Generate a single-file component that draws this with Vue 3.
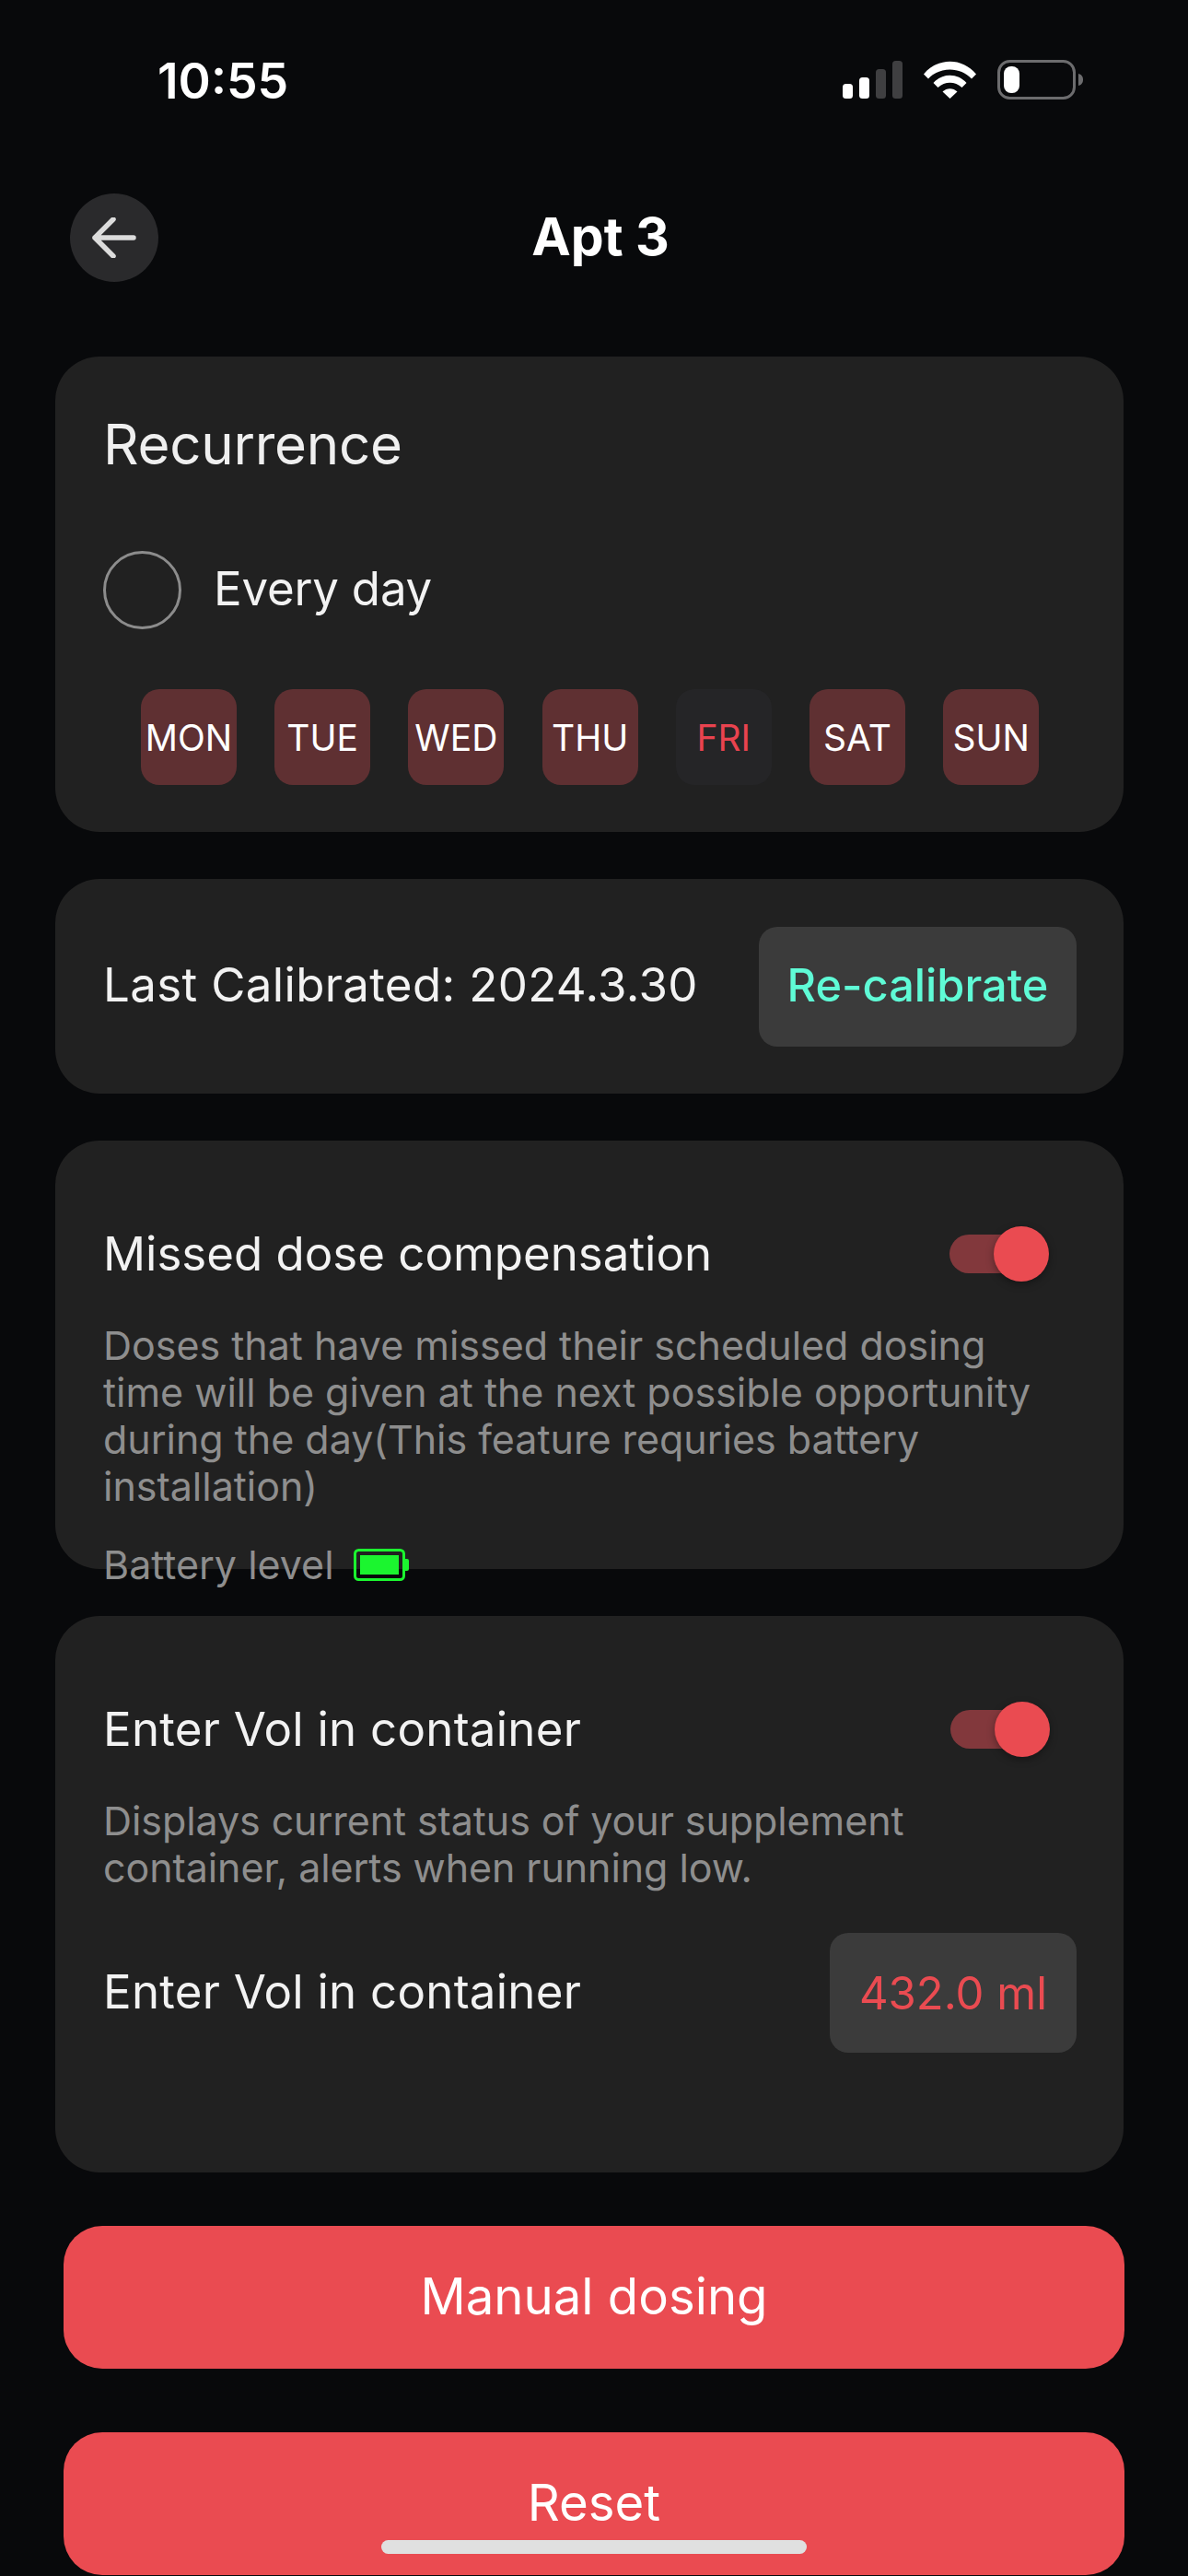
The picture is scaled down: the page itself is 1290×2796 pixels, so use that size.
<script setup>
const days = [
  { label: 'MON', on: true },
  { label: 'TUE', on: true },
  { label: 'WED', on: true },
  { label: 'THU', on: true },
  { label: 'FRI', on: false },
  { label: 'SAT', on: true },
  { label: 'SUN', on: true },
]
</script>

<template>
  <div class="page">
    <div class="status">
      <span class="time">10:55</span>
      <svg class="status-icons" width="270" height="50" viewBox="0 0 270 50">
        <rect x="2" y="26" width="11" height="16" rx="3.5" fill="#fff" />
        <rect x="20" y="19" width="11" height="23" rx="3.5" fill="#fff" />
        <rect x="38" y="10" width="11" height="32" rx="3.5" fill="#3f3f41" />
        <rect x="56" y="1" width="11" height="41" rx="3.5" fill="#3f3f41" />
        <path d="M90 15.5 C105 -3 132 -3 147 15.5 L142 20.5 C130 7 107 7 95 20.5 Z" fill="#fff" />
        <path d="M100.500 25 C110 14 127 14 136.500 25 L131.500 30 C124 23 113 23 105.500 30 Z" fill="#fff" />
        <path d="M110.500 34.500 C115 30 122 30 126.500 34.500 L118.500 42 Z" fill="#fff" />
        <rect x="171.500" y="1.500" width="82" height="40" rx="12" fill="none" stroke="#6c6c6e" stroke-width="3" />
        <rect x="177" y="7" width="17" height="29" rx="8" fill="#fff" />
        <path d="M258 15 C262 16 263 19 263 21.500 C263 24 262 27 258 28 Z" fill="#6c6c6e" />
      </svg>
    </div>

    <header class="nav">
      <button class="back" aria-label="Back">
        <svg width="48" height="44" viewBox="0 0 48 44" fill="none" stroke="#dcdcdc" stroke-width="5.500" stroke-linecap="round" stroke-linejoin="round">
          <path d="M45 22 H3 M23 2 L3 22 L23 42" />
        </svg>
      </button>
      <h1 class="title">Apt 3</h1>
    </header>

    <section class="card recurrence">
      <div class="card-title">Recurrence</div>
      <div class="every">
        <span class="radio"></span>
        <span class="text tight">Every day</span>
      </div>
      <div class="days">
        <div v-for="d in days" :key="d.label" class="day" :class="{ off: !d.on }">{{ d.label }}</div>
      </div>
    </section>

    <section class="card calibrate">
      <span class="text wide">Last Calibrated: 2024.3.30</span>
      <div class="pill teal">Re-calibrate</div>
    </section>

    <section class="card missed">
      <div class="row">
        <span class="text">Missed dose compensation</span>
        <span class="toggle"><i></i></span>
      </div>
      <p class="desc">Doses that have missed their scheduled dosing<br />time will be given at the next possible opportunity<br />during the day(This feature requries battery<br />installation)</p>
      <div class="battery">
        <span>Battery level</span>
        <svg width="60" height="35" viewBox="0 0 60 35">
          <rect x="1.500" y="1.500" width="53" height="32" rx="4" fill="none" stroke="#1bf52f" stroke-width="3" />
          <rect x="7" y="7" width="42" height="21" fill="#1bf52f" />
          <path d="M55 11 H58 Q60 11 60 13 V22 Q60 24 58 24 H55 Z" fill="#1bf52f" />
        </svg>
      </div>
    </section>

    <section class="card volume">
      <div class="row">
        <span class="text medium">Enter Vol in container</span>
        <span class="toggle"><i></i></span>
      </div>
      <p class="desc narrow">Displays current status of your supplement<br />container, alerts when running low.</p>
      <div class="row vol-row">
        <span class="text medium">Enter Vol in container</span>
        <div class="pill red">432.0 ml</div>
      </div>
    </section>

    <button class="action first">Manual dosing</button>
    <button class="action last">Reset</button>
    <div class="home"></div>
  </div>
</template>

<style>
html, body { margin: 0; background: #08090b; }
</style>

<style scoped>
.page {
  position: relative;
  width: 1290px;
  height: 2796px;
  overflow: hidden;
  background: #08090b;
  font-family: Inter, "Liberation Sans", sans-serif;
  color: #f2f2f2;
  box-sizing: border-box;
  padding: 0 70px 0 60px;
}
.status {
  height: 130px;
  margin: 0 -70px 0 -60px;
  padding: 65px 0 0 171px;
  box-sizing: border-box;
  display: flex;
  justify-content: space-between;
  align-items: flex-start;
}
.time {
  font-size: 53.500px;
  font-weight: 600;
  line-height: 46px;
  color: #fff;
}
.status-icons { margin-right: 107px; }
.nav {
  position: relative;
  height: 96px;
  margin-top: 80px;
  margin-bottom: 81px;
  display: flex;
  align-items: center;
  justify-content: center;
  padding-left: 24px;
}
.back {
  position: absolute;
  left: 16px;
  top: 0;
  width: 96px;
  height: 96px;
  border-radius: 50%;
  background: #2a2a2c;
  border: 0;
  padding: 0;
  display: flex;
  align-items: center;
  justify-content: center;
}
.title {
  margin: 0 0 2px;
  font-size: 57px;
  font-weight: 700;
  color: #fff;
  line-height: 66px;
}
.card {
  background: #212121;
  border-radius: 48px;
  box-sizing: border-box;
  width: 1160px;
  margin-bottom: 51px;
}
.recurrence { height: 516px; padding: 61px 52px 0; }
.card-title { font-size: 60px; line-height: 68px; color: #efefef; letter-spacing: -0.25px; }
.text { font-size: 51px; line-height: 58px; color: #f2f2f2; }
.tight { letter-spacing: -0.2px; }
.wide { letter-spacing: 0.35px; margin-bottom: 3px; }
.medium { letter-spacing: 0.24px; }
.every {
  display: flex;
  align-items: center;
  gap: 35px;
  margin-top: 82px;
}
.every .text { position: relative; top: -2px; }
.radio {
  width: 85px;
  height: 85px;
  box-sizing: border-box;
  border: 3.500px solid #8c8c8c;
  border-radius: 50%;
}
.days {
  display: flex;
  gap: 41.200px;
  margin-top: 65px;
  margin-left: 41px;
}
.day {
  width: 104px;
  height: 104px;
  border-radius: 20px;
  background: #5f3032;
  color: #fff;
  font-size: 39px;
  display: flex;
  align-items: center;
  justify-content: center;
}
.day.off { background: #252527; color: #e9434f; }
.calibrate {
  height: 233px;
  padding: 0 51px 0 52px;
  display: flex;
  align-items: center;
  justify-content: space-between;
}
.pill {
  height: 130px;
  border-radius: 20px;
  background: #3b3b3b;
  display: flex;
  align-items: center;
  justify-content: center;
  font-size: 49px;
  box-sizing: border-box;
}
.teal { width: 345px; color: #5ffbd6; font-size: 48.700px; font-weight: 500; padding-bottom: 2px; }
.red { width: 268px; color: #ea4b51; }
.row {
  display: flex;
  align-items: center;
  justify-content: space-between;
}
.missed { height: 465px; padding: 94px 52px 0; }
.volume { height: 604px; padding: 94px 51px 0 52px; margin-bottom: 58px; }
.toggle {
  position: relative;
  width: 96px;
  height: 42px;
  border-radius: 21px;
  background: #82383c;
  margin-right: 41px;
}
.toggle i {
  position: absolute;
  right: -12px;
  top: -9px;
  width: 60px;
  height: 60px;
  border-radius: 50%;
  background: #ea4b51;
  box-shadow: 0 3px 8px rgba(0, 0, 0, .35);
}
.desc {
  margin: 45px 0 0;
  font-size: 43px;
  line-height: 51px;
  letter-spacing: -0.02px;
  color: #8e8e8e;
}
.narrow { letter-spacing: -0.08px; }
.battery {
  display: flex;
  align-items: center;
  gap: 21px;
  margin-top: 32px;
  font-size: 43px;
  line-height: 54px;
  color: #8e8e8e;
}
.vol-row { margin-top: 45px; }
.vol-row .text { margin-bottom: 2px; }
.action {
  display: block;
  width: 1152px;
  height: 155px;
  margin: 0 0 69px 9px;
  padding: 0 0 3px;
  border: 0;
  border-radius: 42px;
  background: #ea4b51;
  color: #fff;
  font-family: inherit;
  font-size: 54.500px;
}
.home {
  position: absolute;
  left: 414px;
  top: 2757px;
  width: 462px;
  height: 15px;
  border-radius: 8px;
  background: #e0e0e0;
}
</style>
